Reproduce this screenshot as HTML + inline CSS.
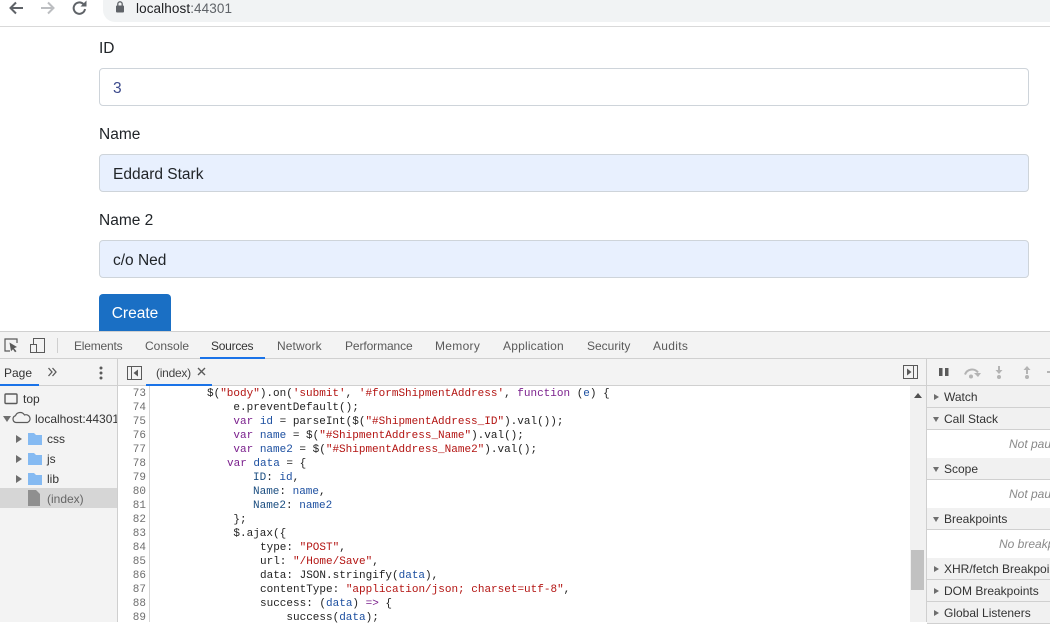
<!DOCTYPE html>
<html><head><meta charset="utf-8"><style>
html,body{margin:0;padding:0;background:#fff}
body{width:1050px;height:622px;overflow:hidden;position:relative;font-family:"Liberation Sans",sans-serif}
.a{position:absolute;white-space:pre}
.lb{font-size:15.5px;color:#212529;left:99px;line-height:20px}
.in{position:absolute;left:99px;width:928px;height:36px;border:1px solid #ced4da;border-radius:4px;font-size:15.5px;line-height:39px;text-indent:13px;color:#212529;background:#e8f0fe}
.t{font-size:12px;color:#5a5a5a;top:338px;line-height:16px}
.n{position:absolute;left:118px;width:28px;margin-top:1px;text-align:right;font:11px/14px "Liberation Mono",monospace;color:#6e6e6e}
.c{position:absolute;margin-top:1px;font:11px/14px "Liberation Mono",monospace;color:#222;white-space:pre}
.k{color:#7a1f8c}.s{color:#b31412}.v{color:#1c4fa0}.p{color:#1a4d80}
.h{position:absolute;left:927px;width:123px;height:21px;background:#f1f1f1;border-bottom:1px solid #d0d0d0;font-size:12px;line-height:23px;color:#333;white-space:pre;text-indent:17px;overflow:hidden}
.b{position:absolute;left:927px;width:123px;height:28px;background:#fff;border-bottom:1px solid #d0d0d0;font-size:12px;font-style:italic;color:#8a8a8a;line-height:28px;white-space:pre;overflow:hidden}
.tr{position:absolute;width:0;height:0}
.r{border-left:6px solid #6e6e6e;border-top:4px solid transparent;border-bottom:4px solid transparent}
.d{border-top:6px solid #6e6e6e;border-left:4px solid transparent;border-right:4px solid transparent}
.rs{border-left:5px solid #6e6e6e;border-top:3.5px solid transparent;border-bottom:3.5px solid transparent;left:934px}
.ds{border-top:5px solid #6e6e6e;border-left:3.5px solid transparent;border-right:3.5px solid transparent;left:933px}
.tree{font-size:12px;color:#333;line-height:16px}
</style></head><body>

<!-- browser toolbar -->
<div class="a" style="left:0;top:26px;width:1050px;height:1px;background:#d9d9d9"></div>
<div class="a" style="left:103px;top:-10px;width:947px;height:32px;background:#f1f3f4;border-radius:12px 0 0 12px"></div>
<svg class="a" style="left:0;top:0" width="130" height="20" viewBox="0 0 130 20" fill="none">
<path d="M23 8H11M16 2.500 10.500 8 16 13.500" stroke="#5f6368" stroke-width="2"/>
<path d="M41 8H53M48 2.500 53.500 8 48 13.500" stroke="#bcbec1" stroke-width="2"/>
<path d="M85 9a5.700 5.700 0 1 1-1.700-5" stroke="#5f6368" stroke-width="2"/>
<path d="M86.500 0.500V6.500H80.500Z" fill="#5f6368"/>
<rect x="116" y="5.500" width="8" height="7" rx="1" fill="#5f6368"/>
<path d="M117.800 5.500V4a2.200 2.200 0 0 1 4.400 0V5.500" stroke="#5f6368" stroke-width="1.300"/>
</svg>
<div class="a" style="left:136px;top:1px;font-size:13.500px;line-height:16px;color:#202124;letter-spacing:.1px">localhost<span style="color:#5f6368">:44301</span></div>

<!-- form -->
<div class="a lb" style="top:39px">ID</div>
<div class="in" style="top:68px;background:#fff;color:#3c4a8c">3</div>
<div class="a lb" style="top:125px">Name</div>
<div class="in" style="top:154px">Eddard Stark</div>
<div class="a lb" style="top:211px">Name 2</div>
<div class="in" style="top:240px">c/o Ned</div>
<div class="a" style="left:99px;top:294px;width:72px;height:38px;background:#1a6fc4;border-radius:4px 4px 0 0;color:#fff;font-size:15.500px;line-height:39px;text-align:center">Create</div>

<!-- devtools top -->
<div class="a" style="left:0;top:331px;width:1050px;height:27px;background:#f3f3f3;border-top:1px solid #d0d0d0"></div>
<div class="a" style="left:0;top:358px;width:1050px;height:1px;background:#d0d0d0"></div>
<svg class="a" style="left:0;top:335px" width="60" height="22" viewBox="0 0 60 22" fill="none">
<path d="M10 16H5V4H17V8" stroke="#5a5a5a" stroke-width="1.200"/>
<path d="M9.500 7.500 17 12l-3 1.200 2.500 3-1.500 1-2-3-2 2Z" fill="#5a5a5a"/>
<rect x="30.500" y="9.500" width="6" height="8" stroke="#5a5a5a"/>
<path d="M33.500 9V3.500H44.500V17.500H37" stroke="#5a5a5a"/>
<path d="M57.500 3V18" stroke="#cfcfcf"/>
</svg>
<div class="a t" style="left:74px;letter-spacing:-.2px">Elements</div>
<div class="a t" style="left:145px">Console</div>
<div class="a t" style="left:211px;color:#333;letter-spacing:-.25px">Sources</div>
<div class="a" style="left:200px;top:357px;width:65px;height:2px;background:#1a73e8"></div>
<div class="a t" style="left:277px;letter-spacing:.1px">Network</div>
<div class="a t" style="left:345px;letter-spacing:-.1px">Performance</div>
<div class="a t" style="left:435px;letter-spacing:.3px">Memory</div>
<div class="a t" style="left:503px;letter-spacing:.2px">Application</div>
<div class="a t" style="left:587px">Security</div>
<div class="a t" style="left:653px;letter-spacing:.3px">Audits</div>

<!-- left nav -->
<div class="a" style="left:0;top:359px;width:117px;height:263px;background:#f3f3f3;border-right:1px solid #cfcfcf"></div>
<div class="a" style="left:0;top:385px;width:117px;height:1px;background:#d0d0d0"></div>
<div class="a" style="left:4px;top:365px;font-size:12px;line-height:16px;color:#333">Page</div>
<div class="a" style="left:0;top:384px;width:39px;height:2px;background:#1a73e8"></div>
<svg class="a" style="left:47px;top:367px" width="11" height="10" fill="none"><path d="M1.500 1 5 5 1.500 9M5.500 1 9 5 5.500 9" stroke="#5a5a5a" stroke-width="1.300"/></svg>
<svg class="a" style="left:98px;top:366px" width="6" height="14"><circle cx="3" cy="2" r="1.500" fill="#5a5a5a"/><circle cx="3" cy="7" r="1.500" fill="#5a5a5a"/><circle cx="3" cy="12" r="1.500" fill="#5a5a5a"/></svg>

<svg class="a" style="left:0;top:388px" width="50" height="116" viewBox="0 0 50 116" fill="none">
<rect x="5" y="6" width="12" height="9.500" rx="1" stroke="#5a5a5a" stroke-width="1.400"/>
<path d="M16 34.500a3.500 3.500 0 0 1-.5-6.800 5 5 0 0 1 9-.7 3.800 3.800 0 0 1 3 7.500Z" stroke="#5a5a5a" stroke-width="1.200"/>
<path d="M28 45h6l2 2h6v10H28Z" fill="#85baf2"/>
<path d="M28 65h6l2 2h6v10H28Z" fill="#85baf2"/>
<path d="M28 85h6l2 2h6v10H28Z" fill="#85baf2"/>
</svg>
<div class="tr d" style="left:3px;top:416px"></div>
<div class="tr r" style="left:16px;top:435px"></div>
<div class="tr r" style="left:16px;top:455px"></div>
<div class="tr r" style="left:16px;top:475px"></div>
<div class="a tree" style="left:23px;top:391px">top</div>
<div class="a tree" style="left:35px;top:411px;width:82px;overflow:hidden">localhost:44301</div>
<div class="a tree" style="left:47px;top:431px">css</div>
<div class="a tree" style="left:47px;top:451px">js</div>
<div class="a tree" style="left:47px;top:471px">lib</div>
<div class="a" style="left:0;top:488px;width:117px;height:20px;background:#d6d6d6"></div>
<svg class="a" style="left:28px;top:490px" width="13" height="16"><path d="M0 0H8L12 4V16H0Z" fill="#8f8f8f"/></svg>
<div class="a tree" style="left:47px;top:491px;color:#666">(index)</div>

<!-- editor tab bar -->
<div class="a" style="left:118px;top:359px;width:808px;height:26px;background:#f3f3f3"></div>
<div class="a" style="left:118px;top:385px;width:808px;height:1px;background:#d0d0d0"></div>
<svg class="a" style="left:127px;top:366px" width="16" height="15" fill="none"><rect x=".5" y=".5" width="14" height="13" stroke="#5a5a5a"/><path d="M4.500 1V13" stroke="#5a5a5a"/><path d="M11 3.500V10.500L6.500 7Z" fill="#5a5a5a"/></svg>
<div class="a" style="left:156px;top:365px;font-size:12px;line-height:16px;color:#444;letter-spacing:-.25px">(index)</div>
<svg class="a" style="left:197px;top:367px" width="9" height="9" fill="none"><path d="M1 1 8 8M8 1 1 8" stroke="#5a5a5a" stroke-width="1.400"/></svg>
<div class="a" style="left:146px;top:384px;width:66px;height:2px;background:#1a73e8"></div>
<svg class="a" style="left:903px;top:365px" width="16" height="15" fill="none"><rect x=".5" y=".5" width="14" height="13" stroke="#5a5a5a"/><path d="M10.500 1V13" stroke="#5a5a5a"/><path d="M4 3.500V10.500L8.500 7Z" fill="#5a5a5a"/></svg>

<!-- gutter -->
<div class="a" style="left:118px;top:386px;width:31px;height:236px;background:#fff;border-right:1px solid #d6d6d6"></div>
<div class="n" style="top:386px">73<br>74<br>75<br>76<br>77<br>78<br>79<br>80<br>81<br>82<br>83<br>84<br>85<br>86<br>87<br>88<br>89</div>

<!-- code -->
<div class="c" style="left:207px;top:386px">$(<span class="s">"body"</span>).on(<span class="s">'submit'</span>, <span class="s">'#formShipmentAddress'</span>, <span class="k">function</span> (<span class="v">e</span>) {</div>
<div class="c" style="left:233.400px;top:400px">e.preventDefault();</div>
<div class="c" style="left:233.400px;top:414px"><span class="k">var</span> <span class="v">id</span> = parseInt($(<span class="s">"#ShipmentAddress_ID"</span>).val());</div>
<div class="c" style="left:233.400px;top:428px"><span class="k">var</span> <span class="v">name</span> = $(<span class="s">"#ShipmentAddress_Name"</span>).val();</div>
<div class="c" style="left:233.400px;top:442px"><span class="k">var</span> <span class="v">name2</span> = $(<span class="s">"#ShipmentAddress_Name2"</span>).val();</div>
<div class="c" style="left:227px;top:456px"><span class="k">var</span> <span class="v">data</span> = {</div>
<div class="c" style="left:253px;top:470px"><span class="p">ID</span>: <span class="v">id</span>,</div>
<div class="c" style="left:253px;top:484px"><span class="p">Name</span>: <span class="v">name</span>,</div>
<div class="c" style="left:253px;top:498px"><span class="p">Name2</span>: <span class="v">name2</span></div>
<div class="c" style="left:233.400px;top:512px">};</div>
<div class="c" style="left:233.400px;top:526px">$.ajax({</div>
<div class="c" style="left:260px;top:540px">type: <span class="s">"POST"</span>,</div>
<div class="c" style="left:260px;top:554px">url: <span class="s">"/Home/Save"</span>,</div>
<div class="c" style="left:260px;top:568px">data: JSON.stringify(<span class="v">data</span>),</div>
<div class="c" style="left:260px;top:582px">contentType: <span class="s">"application/json; charset=utf-8"</span>,</div>
<div class="c" style="left:260px;top:596px">success: (<span class="v">data</span>) <span class="k">=&gt;</span> {</div>
<div class="c" style="left:286.400px;top:610px">success(<span class="v">data</span>);</div>

<!-- scrollbar -->
<div class="a" style="left:910px;top:386px;width:16px;height:236px;background:#f1f1f1"></div>
<div class="tr" style="position:absolute;left:914px;top:393px;border-bottom:5px solid #505050;border-left:4px solid transparent;border-right:4px solid transparent"></div>
<div class="a" style="left:911px;top:550px;width:13px;height:40px;background:#c1c1c1"></div>

<!-- right pane -->
<div class="a" style="left:926px;top:359px;width:1px;height:263px;background:#cfcfcf"></div>
<div class="a" style="left:927px;top:359px;width:123px;height:26px;background:#f3f3f3;border-bottom:1px solid #d0d0d0"></div>
<svg class="a" style="left:935px;top:364px" width="115" height="17" viewBox="0 0 115 17" fill="none">
<path d="M4 4H7.500V12H4ZM10 4H13.500V12H10Z" fill="#5a5a5a"/>
<path d="M30 10.500a7.500 7.500 0 0 1 13-2" stroke="#b4b4b4" stroke-width="2"/>
<path d="M39 9H46L43 13Z" fill="#b4b4b4"/><circle cx="36" cy="12.500" r="2" fill="#b4b4b4"/>
<path d="M64 2V7" stroke="#b4b4b4" stroke-width="2"/><path d="M60.500 6H67.500L64 10Z" fill="#b4b4b4"/><circle cx="64" cy="13" r="2" fill="#b4b4b4"/>
<path d="M92 5V10" stroke="#b4b4b4" stroke-width="2"/><path d="M88.500 6H95.500L92 2Z" fill="#b4b4b4"/><circle cx="92" cy="13" r="2" fill="#b4b4b4"/>
<path d="M112 8H115" stroke="#b4b4b4" stroke-width="2"/>
</svg>

<div class="h" style="top:386px">Watch</div>
<div class="h" style="top:408px">Call Stack</div>
<div class="b" style="top:430px;padding-left:82px;width:41px">Not pau</div>
<div class="h" style="top:458px">Scope</div>
<div class="b" style="top:480px;padding-left:82px;width:41px">Not pau</div>
<div class="h" style="top:508px">Breakpoints</div>
<div class="b" style="top:530px;padding-left:72px;width:51px">No breakp</div>
<div class="h" style="top:558px">XHR/fetch Breakpoints</div>
<div class="h" style="top:580px">DOM Breakpoints</div>
<div class="h" style="top:602px">Global Listeners</div>
<div class="tr rs" style="top:394px"></div>
<div class="tr ds" style="top:417px"></div>
<div class="tr ds" style="top:467px"></div>
<div class="tr ds" style="top:517px"></div>
<div class="tr rs" style="top:566px"></div>
<div class="tr rs" style="top:588px"></div>
<div class="tr rs" style="top:610px"></div>
</body></html>
